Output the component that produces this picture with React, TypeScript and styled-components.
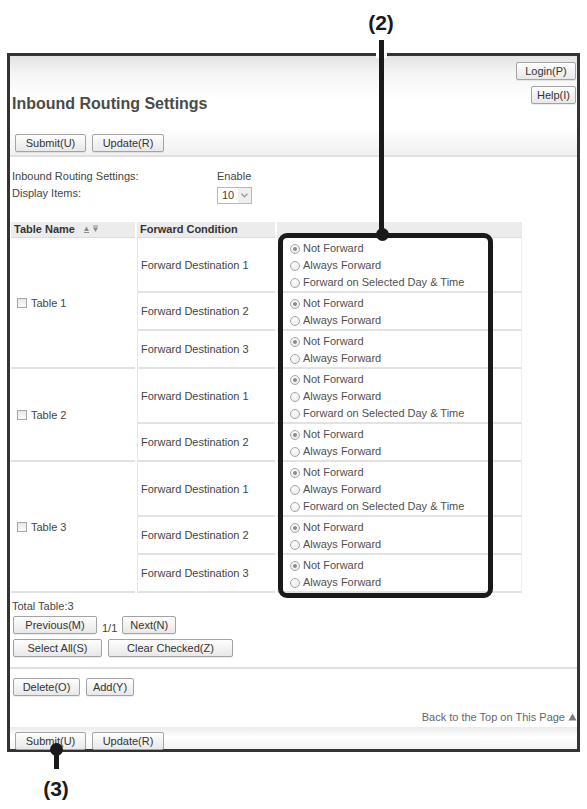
import * as React from 'react'
import styled, { createGlobalStyle } from 'styled-components'

type Destination = { label: string; options: string[] }
type RoutingTable = { name: string; destinations: Destination[] }

const THREE = ['Not Forward', 'Always Forward', 'Forward on Selected Day & Time']
const TWO = ['Not Forward', 'Always Forward']

const tables: RoutingTable[] = [
  {
    name: 'Table 1',
    destinations: [
      { label: 'Forward Destination 1', options: THREE },
      { label: 'Forward Destination 2', options: TWO },
      { label: 'Forward Destination 3', options: TWO },
    ],
  },
  {
    name: 'Table 2',
    destinations: [
      { label: 'Forward Destination 1', options: THREE },
      { label: 'Forward Destination 2', options: TWO },
    ],
  },
  {
    name: 'Table 3',
    destinations: [
      { label: 'Forward Destination 1', options: THREE },
      { label: 'Forward Destination 2', options: TWO },
      { label: 'Forward Destination 3', options: TWO },
    ],
  },
]

export default () => {
  return (
    <Page>
      <GlobalStyle />
      <Frame>
        <Header>
          <HeaderTop>
            <Title>{'Inbound Routing Settings'}</Title>
            <SideButtons>
              <Button $w={60}>{'Login(P)'}</Button>
              <Button $w={45}>{'Help(I)'}</Button>
            </SideButtons>
          </HeaderTop>
          <ButtonRow $top={20}>
            <Button $w={71}>{'Submit(U)'}</Button>
            <Button $w={72}>{'Update(R)'}</Button>
          </ButtonRow>
        </Header>

        <Settings>
          <Label>{'Inbound Routing Settings:'}</Label>
          <Label>{'Enable'}</Label>
          <Label>{'Display Items:'}</Label>
          <div>
            <SelectBox>
              {'10'}
              <SelectArrow>
                <svg width="7" height="5" viewBox="0 0 7 5">
                  <path d="M0.5 0.8 L3.5 3.8 L6.5 0.8" fill="none" stroke="#9a9a9a" strokeWidth="1.4" />
                </svg>
              </SelectArrow>
            </SelectBox>
          </div>
        </Settings>

        <Table>
          <colgroup>
            <Col $w={124} />
            <Col $w={138} />
            <Col $w={245} />
          </colgroup>
          <thead>
            <tr>
              <Th>
                {'Table Name'}
                <SortIcon width="16" height="9" viewBox="0 0 16 9">
                  <path d="M1 6 L3.5 1.5 L6 6 Z" fill="#8a8a8a" />
                  <rect x="1" y="7" width="5" height="1" fill="#8a8a8a" />
                  <rect x="10" y="0.5" width="5" height="1" fill="#8a8a8a" />
                  <path d="M10 2.5 L15 2.5 L12.5 7 Z" fill="#8a8a8a" />
                </SortIcon>
              </Th>
              <Th>{'Forward Condition'}</Th>
              <Th />
            </tr>
          </thead>
          <tbody>
            {tables.map((table) =>
              table.destinations.map((dest, i) => (
                <tr key={table.name + dest.label}>
                  {i === 0 && (
                    <NameCell rowSpan={table.destinations.length}>
                      <CheckBox />
                      {table.name}
                    </NameCell>
                  )}
                  <DestCell>{dest.label}</DestCell>
                  <OptionCell>
                    {dest.options.map((option, j) => (
                      <RadioLine key={option}>
                        <Radio $checked={j === 0} />
                        {option}
                      </RadioLine>
                    ))}
                  </OptionCell>
                </tr>
              ))
            )}
          </tbody>
        </Table>

        <Summary>{'Total Table:3'}</Summary>
        <ButtonRow $top={2} $gap={5} $bottom>
          <Button $w={84}>{'Previous(M)'}</Button>
          <PageInfo>{'1/1'}</PageInfo>
          <Button $w={54}>{'Next(N)'}</Button>
        </ButtonRow>
        <ButtonRow $top={5}>
          <Button $w={89}>{'Select All(S)'}</Button>
          <Button $w={125}>{'Clear Checked(Z)'}</Button>
        </ButtonRow>

        <Divider />

        <ButtonRow $top={9}>
          <Button $w={67}>{'Delete(O)'}</Button>
          <Button $w={48}>{'Add(Y)'}</Button>
        </ButtonRow>

        <BackToTop>
          {'Back to the Top on This Page'}
          <svg width="9" height="8" viewBox="0 0 9 8">
            <path d="M0.5 7.5 L4.5 0.5 L8.5 7.5 Z" fill="#7a7a7a" />
          </svg>
        </BackToTop>

        <Footer>
          <Button $w={71}>{'Submit(U)'}</Button>
          <Button $w={72}>{'Update(R)'}</Button>
        </Footer>
      </Frame>

      <Callout $x={381} $y={12}>{'(2)'}</Callout>
      <LeaderGap />
      <Leader $x={379} $y={40} $h={195} />
      <Dot $x={382} $y={234} />
      <Highlight />

      <Leader $x={54} $y={749} $h={20} />
      <Dot $x={56.5} $y={749} />
      <Callout $x={56} $y={778}>{'(3)'}</Callout>
    </Page>
  )
}

const GlobalStyle = createGlobalStyle`
  html, body {
    margin: 0;
    padding: 0;
    background: #fff;
  }
  body {
    font-family: 'Liberation Sans', Arial, sans-serif;
  }
`

const Page = styled.div`
  position: relative;
  width: 587px;
  height: 809px;
  overflow: hidden;
  padding-top: 53px;
  box-sizing: border-box;
  background: #fff;
  font-family: 'Liberation Sans', Arial, sans-serif;
  font-size: 11px;
  color: #444;
`

const Frame = styled.div`
  width: 573px;
  margin-left: 7px;
  box-sizing: border-box;
  border: 3px solid #333;
  background: #fff;
`

const Header = styled.div`
  padding: 6px 1px 3px 0;
  border-bottom: 2px solid #e0e0e0;
  background: linear-gradient(
    to bottom,
    #e3e3e3 0%,
    #f5f5f5 18%,
    #ffffff 45%,
    #ffffff 72%,
    #f0f0f0 100%
  );
`

const HeaderTop = styled.div`
  display: flex;
  justify-content: space-between;
  align-items: flex-start;
`

const Title = styled.h1`
  margin: 32px 0 0 2px;
  font-size: 16px;
  line-height: 20px;
  font-weight: bold;
  color: #4a4a4a;
`

const SideButtons = styled.div`
  display: flex;
  flex-direction: column;
  align-items: flex-end;
  gap: 6px;
`

const ButtonRow = styled.div<{ $top: number; $gap?: number; $bottom?: boolean }>`
  display: flex;
  align-items: ${(p) => (p.$bottom ? 'flex-end' : 'center')};
  gap: ${(p) => p.$gap ?? 6}px;
  margin-top: ${(p) => p.$top}px;
  padding-left: ${(p) => (p.$top === 20 ? 5 : 3)}px;
`

const Button = styled.button<{ $w: number }>`
  box-sizing: border-box;
  width: ${(p) => p.$w}px;
  height: 18px;
  padding: 0;
  border: 1px solid #a3a3a3;
  border-radius: 2px;
  background: linear-gradient(to bottom, #fefefe, #e8e8e8);
  box-shadow: 0 1px 0 rgba(0, 0, 0, 0.07);
  font-family: 'Liberation Sans', Arial, sans-serif;
  font-size: 11px;
  line-height: 16px;
  color: #333;
  white-space: nowrap;
`

const Settings = styled.div`
  display: grid;
  grid-template-columns: 205px auto;
  grid-template-rows: 17px 19px;
  padding: 11px 0 0 2px;
  line-height: 17px;
`

const Label = styled.div`
  color: #444;
`

const SelectBox = styled.div`
  display: inline-flex;
  align-items: center;
  justify-content: space-between;
  box-sizing: border-box;
  width: 35px;
  height: 17px;
  margin-top: 2px;
  padding-left: 4px;
  border: 1px solid #b8b8b8;
  background: #fff;
  line-height: 15px;
  color: #444;
`

const SelectArrow = styled.span`
  display: flex;
  align-items: center;
  justify-content: center;
  width: 13px;
  height: 100%;
  background: #efefef;
`

const Table = styled.table`
  table-layout: fixed;
  width: 515px;
  margin: 18px 0 0 -1px;
  border-collapse: separate;
  border-spacing: 2px 0;
  font-size: 11px;
  color: #444;
`

const Col = styled.col<{ $w: number }>`
  width: ${(p) => p.$w}px;
`

const Th = styled.th`
  height: 15px;
  padding: 0 3px;
  border-bottom: 1px solid #dcdcdc;
  background: #ececec;
  text-align: left;
  font-weight: bold;
  line-height: 15px;
  color: #333;
  white-space: nowrap;
`

const SortIcon = styled.svg`
  margin-left: 8px;
  vertical-align: -1px;
`

const NameCell = styled.td`
  padding: 0 0 0 6px;
  border-bottom: 2px solid #e2e2e2;
  vertical-align: middle;
`

const DestCell = styled.td`
  padding: 0 0 0 3px;
  border-bottom: 2px solid #e2e2e2;
  border-left: 1px solid #e8e8e8;
  vertical-align: middle;
  white-space: nowrap;
`

const OptionCell = styled.td`
  padding: 2px 0 0 13px;
  border-bottom: 2px solid #e2e2e2;
  border-right: 1px solid #ededed;
  vertical-align: top;
`

const RadioLine = styled.div`
  display: flex;
  align-items: center;
  height: 17px;
  line-height: 17px;
  color: #505050;
  white-space: nowrap;
`

const Radio = styled.span<{ $checked: boolean }>`
  position: relative;
  box-sizing: border-box;
  width: 10px;
  height: 10px;
  margin-right: 3px;
  border: 1px solid #a6a6a6;
  border-radius: 50%;
  background: radial-gradient(circle at 40% 35%, #ffffff, #e4e4e4);

  &::after {
    content: '';
    display: ${(p) => (p.$checked ? 'block' : 'none')};
    position: absolute;
    left: 2px;
    top: 2px;
    width: 4px;
    height: 4px;
    border-radius: 50%;
    background: #8c8c8c;
  }
`

const CheckBox = styled.span`
  display: inline-block;
  box-sizing: border-box;
  width: 10px;
  height: 10px;
  margin-right: 4px;
  border: 1px solid #a8a8a8;
  background: linear-gradient(to bottom, #e8e8e8, #fafafa);
  vertical-align: -1px;
`

const Summary = styled.div`
  margin-top: 5px;
  padding-left: 2px;
  line-height: 16px;
`

const PageInfo = styled.span`
  line-height: 12px;
  color: #444;
`

const Divider = styled.div`
  height: 2px;
  margin-top: 10px;
  background: #e0e0e0;
`

const BackToTop = styled.div`
  display: flex;
  justify-content: flex-end;
  align-items: center;
  gap: 3px;
  margin-top: 13px;
  line-height: 16px;
  color: #666;
`

const Footer = styled.div`
  display: flex;
  gap: 6px;
  height: 22px;
  box-sizing: border-box;
  margin-top: 2px;
  padding: 5px 0 0 5px;
  background: linear-gradient(to bottom, #ebebeb, #ffffff 45%, #f3f3f3);
`

const Callout = styled.div<{ $x: number; $y: number }>`
  position: absolute;
  left: ${(p) => p.$x - 20}px;
  top: ${(p) => p.$y}px;
  width: 40px;
  text-align: center;
  font-family: 'Liberation Sans', Arial, sans-serif;
  font-size: 21px;
  line-height: 21px;
  font-weight: bold;
  color: #1a1a1a;
`

const Leader = styled.div<{ $x: number; $y: number; $h: number }>`
  position: absolute;
  left: ${(p) => p.$x}px;
  top: ${(p) => p.$y}px;
  width: 5px;
  height: ${(p) => p.$h}px;
  background: #1a1a1a;
`

const LeaderGap = styled.div`
  position: absolute;
  left: 376px;
  top: 51px;
  width: 11px;
  height: 7px;
  background: #fff;
`

const Dot = styled.div<{ $x: number; $y: number }>`
  position: absolute;
  left: ${(p) => p.$x - 6.5}px;
  top: ${(p) => p.$y - 6.5}px;
  width: 13px;
  height: 13px;
  border-radius: 50%;
  background: #1a1a1a;
`

const Highlight = styled.div`
  position: absolute;
  left: 278px;
  top: 233px;
  width: 215px;
  height: 365px;
  box-sizing: border-box;
  border: 5px solid #1a1a1a;
  border-radius: 9px;
`
